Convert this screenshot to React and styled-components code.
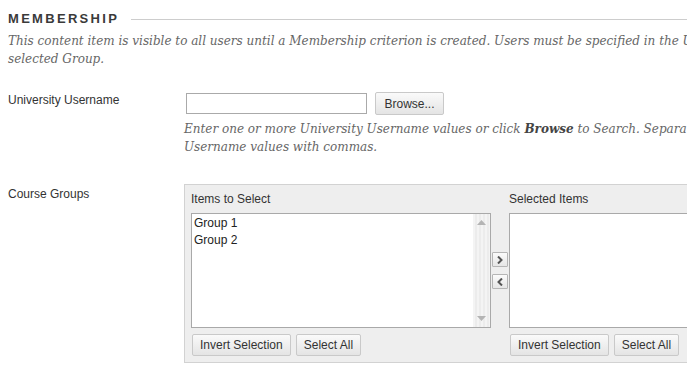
import styled, { createGlobalStyle } from 'styled-components';

const GlobalStyle = createGlobalStyle`
    html, body {
        margin: 0;
        padding: 0;
        background: #fff;
        overflow: hidden;
    }
    body {
        font-family: "Liberation Sans", Arial, sans-serif;
        font-size: 12px;
        color: #333;
    }
`;

const Page = styled.div`
    width: 900px;
    padding: 10px 0 0 8px;
`;

const SectionHeader = styled.div`
    display: flex;
    align-items: center;
    height: 18px;
`;

const SectionTitle = styled.h2`
    margin: 0;
    font-size: 13px;
    font-weight: bold;
    letter-spacing: 2.3px;
    color: #3a3a3a;
    line-height: 18px;
`;

const SectionRule = styled.div`
    flex: 1;
    height: 1px;
    background: #cdcdcd;
    margin-left: 12px;
`;

const Note = styled.p`
    margin: ${(p) => p.$top || 0}px 0 0;
    font-family: "DejaVu Serif", Georgia, serif;
    font-style: italic;
    font-size: 12px;
    line-height: 18px;
    color: #666;
    white-space: nowrap;
    b {
        color: #444;
    }
`;

const Row = styled.div`
    display: grid;
    grid-template-columns: 176px 1fr;
    margin-top: ${(p) => p.$top}px;
`;

const Label = styled.div`
    line-height: 14px;
    padding-top: ${(p) => p.$pad || 0}px;
    color: #333;
`;

const InputLine = styled.div`
    display: flex;
    align-items: center;
    gap: 8px;
    padding-left: 2px;
`;

const TextInput = styled.input`
    box-sizing: border-box;
    width: 181px;
    height: 21px;
    border: 1px solid #aaa;
    margin: 0;
    padding: 0 3px;
    font: inherit;
`;

const Button = styled.button`
    box-sizing: border-box;
    height: ${(p) => p.$h || 22}px;
    padding: 0 ${(p) => p.$pad || 7}px;
    border: 1px solid #c9c9c9;
    border-radius: 2px;
    background: linear-gradient(#fafafa, #e4e4e4);
    font-family: "Liberation Sans", Arial, sans-serif;
    font-size: 12px;
    color: #333;
    cursor: pointer;
`;

const Panel = styled.div`
    display: flex;
    align-items: flex-start;
    background: #eee;
    border: 1px solid #d2d2d2;
    padding: 6px;
    width: max-content;
`;

const Column = styled.div`
    display: flex;
    flex-direction: column;
`;

const ColumnTitle = styled.div`
    line-height: 16px;
    margin-bottom: 6px;
    color: #333;
    font-size: 12px;
`;

const ListBox = styled.div`
    box-sizing: border-box;
    width: 300px;
    height: 115px;
    border: 1px solid #a9a9a9;
    background: #fff;
    display: flex;
`;

const Options = styled.div`
    flex: 1;
    padding: 1px 2px;
`;

const Option = styled.div`
    line-height: 17px;
    font-size: 12px;
    color: #222;
`;

const ScrollTrack = styled.div`
    width: 17px;
    background: repeating-linear-gradient(90deg, #f4f4f4 0 2px, #ececec 2px 4px);
    display: flex;
    flex-direction: column;
    justify-content: space-between;
    align-items: center;
    padding: 6px 0;
`;

const ButtonRow = styled.div`
    display: flex;
    gap: 5px;
    margin: 6px 0 0 1px;
`;

const Movers = styled.div`
    width: 18px;
    height: 115px;
    margin-top: 22px;
    display: flex;
    flex-direction: column;
    justify-content: center;
    align-items: center;
    gap: 7px;
`;

const MoveButton = styled.button`
    box-sizing: border-box;
    width: 16px;
    height: 15px;
    padding: 0;
    border: 1px solid #b5b5b5;
    border-radius: 1px;
    background: linear-gradient(#fbfbfb, #e6e6e6);
    display: flex;
    align-items: center;
    justify-content: center;
`;

const Triangle = ({ down }) => (
    <svg width="9" height="5" viewBox="0 0 9 5">
        <path d={down ? 'M0 0 H9 L4.5 5 Z' : 'M0 5 H9 L4.5 0 Z'} fill="#b4b4b4" />
    </svg>
);

const Chevron = ({ left }) => (
    <svg width="6" height="8" viewBox="0 0 6 8">
        <path d={left ? 'M5 0.5 L1.5 4 L5 7.5' : 'M1 0.5 L4.5 4 L1 7.5'} stroke="#555" strokeWidth="2" fill="none" />
    </svg>
);

const Picker = ({ title, items, scroll }) => (
    <Column>
        <ColumnTitle>{title}</ColumnTitle>
        <ListBox>
            <Options>
                {items.map((item) => <Option key={item}>{item}</Option>)}
            </Options>
            {scroll && (
                <ScrollTrack>
                    <Triangle />
                    <Triangle down />
                </ScrollTrack>
            )}
        </ListBox>
        <ButtonRow>
            <Button>Invert Selection</Button>
            <Button>Select All</Button>
        </ButtonRow>
    </Column>
);

const App = () => {
    return (
        <Page>
            <GlobalStyle />
            <SectionHeader>
                <SectionTitle>MEMBERSHIP</SectionTitle>
                <SectionRule />
            </SectionHeader>
            <Note $top={4}>
                This content item is visible to all users until a Membership criterion is created. Users must be specified in the University Username field or be members of the
                <br />
                selected Group.
            </Note>
            <Row $top={24}>
                <Label $pad={1}>University Username</Label>
                <div>
                    <InputLine>
                        <TextInput type="text" />
                        <Button $h={23} $pad={8.5}>Browse...</Button>
                    </InputLine>
                    <Note $top={5}>
                        Enter one or more University Username values or click <b>Browse</b> to Search. Separate multiple University
                        <br />
                        Username values with commas.
                    </Note>
                </div>
            </Row>
            <Row $top={28}>
                <Label $pad={3}>Course Groups</Label>
                <Panel>
                    <Picker title="Items to Select" items={['Group 1', 'Group 2']} scroll />
                    <Movers>
                        <MoveButton><Chevron /></MoveButton>
                        <MoveButton><Chevron left /></MoveButton>
                    </Movers>
                    <Picker title="Selected Items" items={[]} />
                </Panel>
            </Row>
        </Page>
    );
};

export default App;
